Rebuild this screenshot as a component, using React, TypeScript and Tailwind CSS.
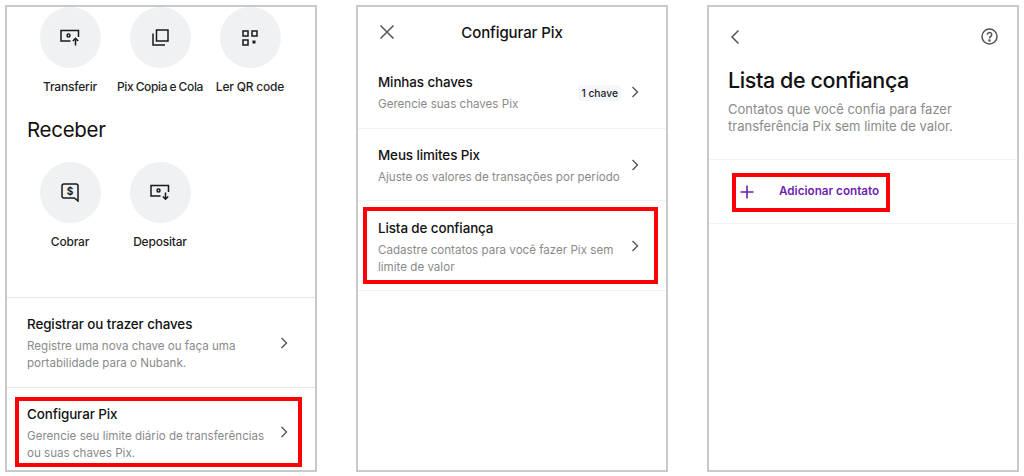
import type { ReactNode } from "react";

function Chevron() {
  return (
    <svg width="10" height="14" viewBox="0 0 10 14" fill="none" stroke="#555" strokeWidth="1.4" className="shrink-0 self-center">
      <path d="M2.500 2 7.500 7l-5 5" />
    </svg>
  );
}

function CashBox({ dir }: { dir: "up" | "down" }) {
  return (
    <svg width="20" height="17" viewBox="0 0 20 17" fill="none" stroke="#1a1a1a" strokeWidth="1.5">
      <path d="M10.500 12H1V1.500h17.500V8" />
      <circle cx="8.500" cy="6.500" r="1.500" />
      {dir === "up" ? (
        <path d="M15.500 16.500V9.500M12.800 12l2.700-2.700 2.700 2.700" />
      ) : (
        <path d="M15.500 8.500V15M12.800 12.500l2.700 2.700 2.700-2.700" />
      )}
    </svg>
  );
}

function CopyIcon() {
  return (
    <svg width="17" height="17" viewBox="0 0 17 17" fill="none" stroke="#1a1a1a" strokeWidth="1.5">
      <rect x="4.500" y="1" width="11.500" height="11" />
      <path d="M1 4.500V16h12" />
    </svg>
  );
}

function QrIcon() {
  return (
    <svg width="16" height="16" viewBox="0 0 16 16" fill="none" stroke="#1a1a1a" strokeWidth="1.5">
      <rect x="1" y="1" width="5" height="5" />
      <rect x="10" y="1" width="5" height="5" />
      <rect x="1" y="10" width="5" height="5" />
      <rect x="10.500" y="10.500" width="3" height="3" fill="#1a1a1a" stroke="none" />
    </svg>
  );
}

function BillChat() {
  return (
    <svg width="18" height="19" viewBox="0 0 18 19" fill="none" stroke="#1a1a1a" strokeWidth="1.5">
      <path d="M3 1h12a2 2 0 0 1 2 2v15l-3.500-3H3a2 2 0 0 1-2-2V3a2 2 0 0 1 2-2Z" />
      <text x="9" y="12" textAnchor="middle" fontSize="10" fontWeight="700" fill="#1a1a1a" stroke="none" fontFamily="Inter, sans-serif">$</text>
    </svg>
  );
}

function Action({ icon, label, tight }: { icon: ReactNode; label: string; tight?: boolean }) {
  return (
    <div className="flex w-[90px] flex-col items-center">
      <div className="flex h-[61px] w-[61px] items-center justify-center rounded-full bg-[#f0f1f3]">{icon}</div>
      <span className={`mt-[11px] whitespace-nowrap text-[12px] leading-[16px] font-medium text-[#1f1f1f] ${tight ? "tracking-[-0.35px] [word-spacing:-0.500px]" : "tracking-[-0.2px]"}`}>{label}</span>
    </div>
  );
}

function Row({
  title,
  lines,
  height,
  badge,
  border,
  highlight,
  top = "pt-[16px]",
}: {
  title: string;
  lines: string[];
  height: string;
  badge?: string;
  border?: string;
  highlight?: string;
  top?: string;
}) {
  return (
    <div className={`relative flex items-center pr-[26px] pl-[20px] ${top} ${height} ${border ?? ""}`}>
      <div className="min-w-0 flex-1 self-start">
        <div className="text-[13.400px] leading-[20px] font-medium tracking-[-0.1px] text-[#111]">{title}</div>
        <div className="mt-[4px] text-[11.600px] leading-[17px] text-[#8a8a8a]">
          {lines.map((l) => (
            <div key={l} className="whitespace-nowrap">{l}</div>
          ))}
        </div>
      </div>
      {badge && (
        <span className="mr-[9px] -translate-y-[7px] rounded-[4px] bg-[#f5f7fc] px-[3px] text-[10.300px] leading-[16px] font-medium text-[#222]">{badge}</span>
      )}
      <div className="-mt-[16px] flex self-center">
        <Chevron />
      </div>
      {highlight && <div className={`absolute border-[4px] border-[#fb0007] ${highlight}`} />}
    </div>
  );
}

function Panel({ children }: { children: ReactNode }) {
  return (
    <div className="h-[467px] w-[312px] shrink-0 overflow-hidden border-2 border-[#c9c9c9] bg-white">{children}</div>
  );
}

export default function App() {
  return (
    <div
      className="flex h-[476px] w-[1024px] items-start gap-[39px] bg-white pt-[5px] pl-[5px]"
      style={{ fontFamily: "Inter, 'Liberation Sans', sans-serif" }}
    >
      <Panel>
        <div className="h-[291px] border-b border-[#e6e6e6] pl-[18px]">
          <div className="flex">
            <Action icon={<CashBox dir="up" />} label="Transferir" />
            <Action icon={<CopyIcon />} label="Pix Copia e Cola" tight />
            <Action icon={<QrIcon />} label="Ler QR code" />
          </div>
          <h2 className="mt-[21px] pl-[2px] text-[20.500px] leading-[28px] font-normal tracking-[-0.3px] text-[#111]">Receber</h2>
          <div className="mt-[18px] flex">
            <Action icon={<BillChat />} label="Cobrar" />
            <Action icon={<CashBox dir="down" />} label="Depositar" />
          </div>
        </div>
        <Row
          title="Registrar ou trazer chaves"
          lines={["Registre uma nova chave ou faça uma", "portabilidade para o Nubank."]}
          height="h-[90px]"
          border="border-b border-[#e6e6e6]"
        />
        <Row
          title="Configurar Pix"
          lines={["Gerencie seu limite diário de transferências", "ou suas chaves Pix."]}
          height="h-[88px]"
          highlight="top-[9px] left-[8px] h-[70px] w-[287px]"
        />
      </Panel>

      <Panel>
        <div className="relative flex h-[48px] items-center justify-center pt-[4px]">
          <svg width="16" height="16" viewBox="0 0 16 16" fill="none" stroke="#555" strokeWidth="1.5" className="absolute top-[17px] left-[21px]">
            <path d="M1.500 1.500l13 13M14.500 1.500l-13 13" />
          </svg>
          <span className="text-[15px] font-medium tracking-[-0.1px] text-[#111]">Configurar Pix</span>
        </div>
        <Row title="Minhas chaves" lines={["Gerencie suas chaves Pix"]} height="h-[74px]" badge="1 chave" border="border-b border-[#f2f2f2]" top="pt-[17px]" />
        <Row title="Meus limites Pix" lines={["Ajuste os valores de transações por período"]} height="h-[72px]" border="border-b border-[#f2f2f2]" />
        <Row
          title="Lista de confiança"
          lines={["Cadastre contatos para você fazer Pix sem", "limite de valor"]}
          height="h-[90px]"
          border="border-b border-[#f2f2f2]"
          highlight="top-[6px] left-[5px] h-[77px] w-[295px]"
          top="pt-[17px]"
        />
      </Panel>

      <Panel>
        <div className="flex items-center justify-between pt-[21px] pr-[19px] pl-[21px]">
          <svg width="10" height="16" viewBox="0 0 10 16" fill="none" stroke="#555" strokeWidth="1.5">
            <path d="M8.500 1.500 2 8l6.500 6.500" />
          </svg>
          <svg width="17" height="17" viewBox="0 0 17 17" fill="none" stroke="#555" strokeWidth="1.500">
            <circle cx="8.500" cy="8.500" r="7.500" />
            <path d="M6.300 6.700a2.200 2.200 0 1 1 3.400 1.800c-.8.500-1.200.9-1.200 1.900" />
            <circle cx="8.500" cy="12.600" r="0.500" fill="#555" />
          </svg>
        </div>
        <h1 className="mt-[20px] pl-[19px] text-[21.500px] leading-[30px] font-medium tracking-[-0.4px] text-[#111]">Lista de confiança</h1>
        <p className="mt-[6px] h-[58px] pl-[19px] text-[13px] leading-[17px] text-[#8a8a8a]">
          Contatos que você confia para fazer
          <br />
          transferência Pix sem limite de valor.
        </p>
        <div className="relative flex h-[65px] items-center border-y border-[#f2f2f2] pl-[31px]">
          <svg width="14" height="14" viewBox="0 0 14 14" fill="none" stroke="#6d1fb0" strokeWidth="1.600">
            <path d="M7 0.500v13M0.500 7h13" />
          </svg>
          <span className="mt-[1px] ml-[25px] whitespace-nowrap text-[11.700px] font-semibold text-[#6d1fb0]">Adicionar contato</span>
          <div className="absolute top-[13px] left-[23px] h-[39px] w-[158px] border-[4px] border-[#fb0007]" />
        </div>
      </Panel>
    </div>
  );
}
